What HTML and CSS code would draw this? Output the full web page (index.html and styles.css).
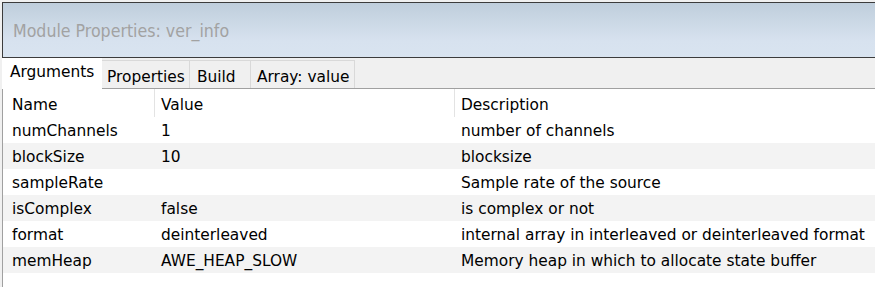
FILE: index.html
```html
<!DOCTYPE html>
<html lang="en">
<head>
  <meta charset="UTF-8">
  <title>Module Properties</title>
  <link rel="stylesheet" href="styles.css">
</head>
<body>
  <div class="window">
    <!-- Title bar -->
    <div class="titlebar">Module Properties: ver_info</div>

    <!-- Tabs -->
    <div class="tabs">
      <div class="tab active">Arguments</div>
      <div class="tab tab-props">Properties</div>
      <div class="tab tab-build">Build</div>
      <div class="tab tab-array">Array: value</div>
    </div>

    <!-- Arguments grid -->
    <div class="grid">
      <div class="row head">
        <div class="cell name">Name</div>
        <div class="cell value sep">Value</div>
        <div class="cell desc sep">Description</div>
      </div>
      <div class="row">
        <div class="cell name">numChannels</div>
        <div class="cell value">1</div>
        <div class="cell desc">number of channels</div>
      </div>
      <div class="row alt">
        <div class="cell name">blockSize</div>
        <div class="cell value">10</div>
        <div class="cell desc">blocksize</div>
      </div>
      <div class="row">
        <div class="cell name">sampleRate</div>
        <div class="cell value"></div>
        <div class="cell desc">Sample rate of the source</div>
      </div>
      <div class="row alt">
        <div class="cell name">isComplex</div>
        <div class="cell value">false</div>
        <div class="cell desc">is complex or not</div>
      </div>
      <div class="row">
        <div class="cell name">format</div>
        <div class="cell value">deinterleaved</div>
        <div class="cell desc">internal array in interleaved or deinterleaved format</div>
      </div>
      <div class="row alt">
        <div class="cell name">memHeap</div>
        <div class="cell value">AWE_HEAP_SLOW</div>
        <div class="cell desc">Memory heap in which to allocate state buffer</div>
      </div>
    </div>
  </div>
</body>
</html>
```

FILE: styles.css
```css
body {
  margin: 0;
  background: #f0f0f0;
  font-family: "DejaVu Sans", sans-serif;
  color: #000;
  overflow: hidden;
}
.window {
  padding: 2px 0 0 2px;
}
.titlebar {
  height: 54px;
  border: 1px solid #3c3c3c;
  border-right: none;
  background: linear-gradient(#bfcedc, #d7e2ef 70%, #d9e4f0);
  color: #a2a2a2;
  font-family: "DejaVu Sans Condensed", "DejaVu Sans", sans-serif;
  font-size: 17.6px;
  line-height: 56px;
  padding-left: 10px;
}
.tabs {
  display: flex;
  height: 30px;
  border-bottom: 1px solid #a0a0a0;
  font-size: 15.4px;
}
.tab {
  margin-top: 2px;
  height: 28px;
  line-height: 32px;
  padding: 0 0 0 6px;
  border: 1px solid #d9d9d9;
  border-left: none;
  border-bottom: none;
  box-sizing: border-box;
  background: #f0f0f0;
  white-space: nowrap;
}
.tab-props {
  width: 88px;
  padding-left: 5px;
}
.tab-build {
  width: 61px;
  padding-left: 7px;
}
.tab-array {
  width: 104px;
}
.tab.active {
  margin-top: 0;
  height: 31px;
  margin-bottom: -1px;
  line-height: 29px;
  width: 100px;
  padding-left: 8px;
  border: none;
  background: #fff;
}
.grid {
  background: #fff;
  border-left: 1px solid #a0a0a0;
  height: 200px;
  font-size: 15.4px;
}
.row {
  display: flex;
  height: 26px;
  line-height: 29px;
}
.row.head {
  height: 28px;
  line-height: 33px;
}
.row.alt {
  background: #f3f3f3;
}
.cell {
  white-space: nowrap;
  box-sizing: border-box;
}
.name {
  width: 151px;
  padding-left: 9px;
}
.value {
  width: 300px;
  padding-left: 7px;
}
.desc {
  flex: 1;
  padding-left: 7px;
}
.head .sep {
  border-left: 1px solid #e3e3e3;
  padding-left: 6px;
}
```
